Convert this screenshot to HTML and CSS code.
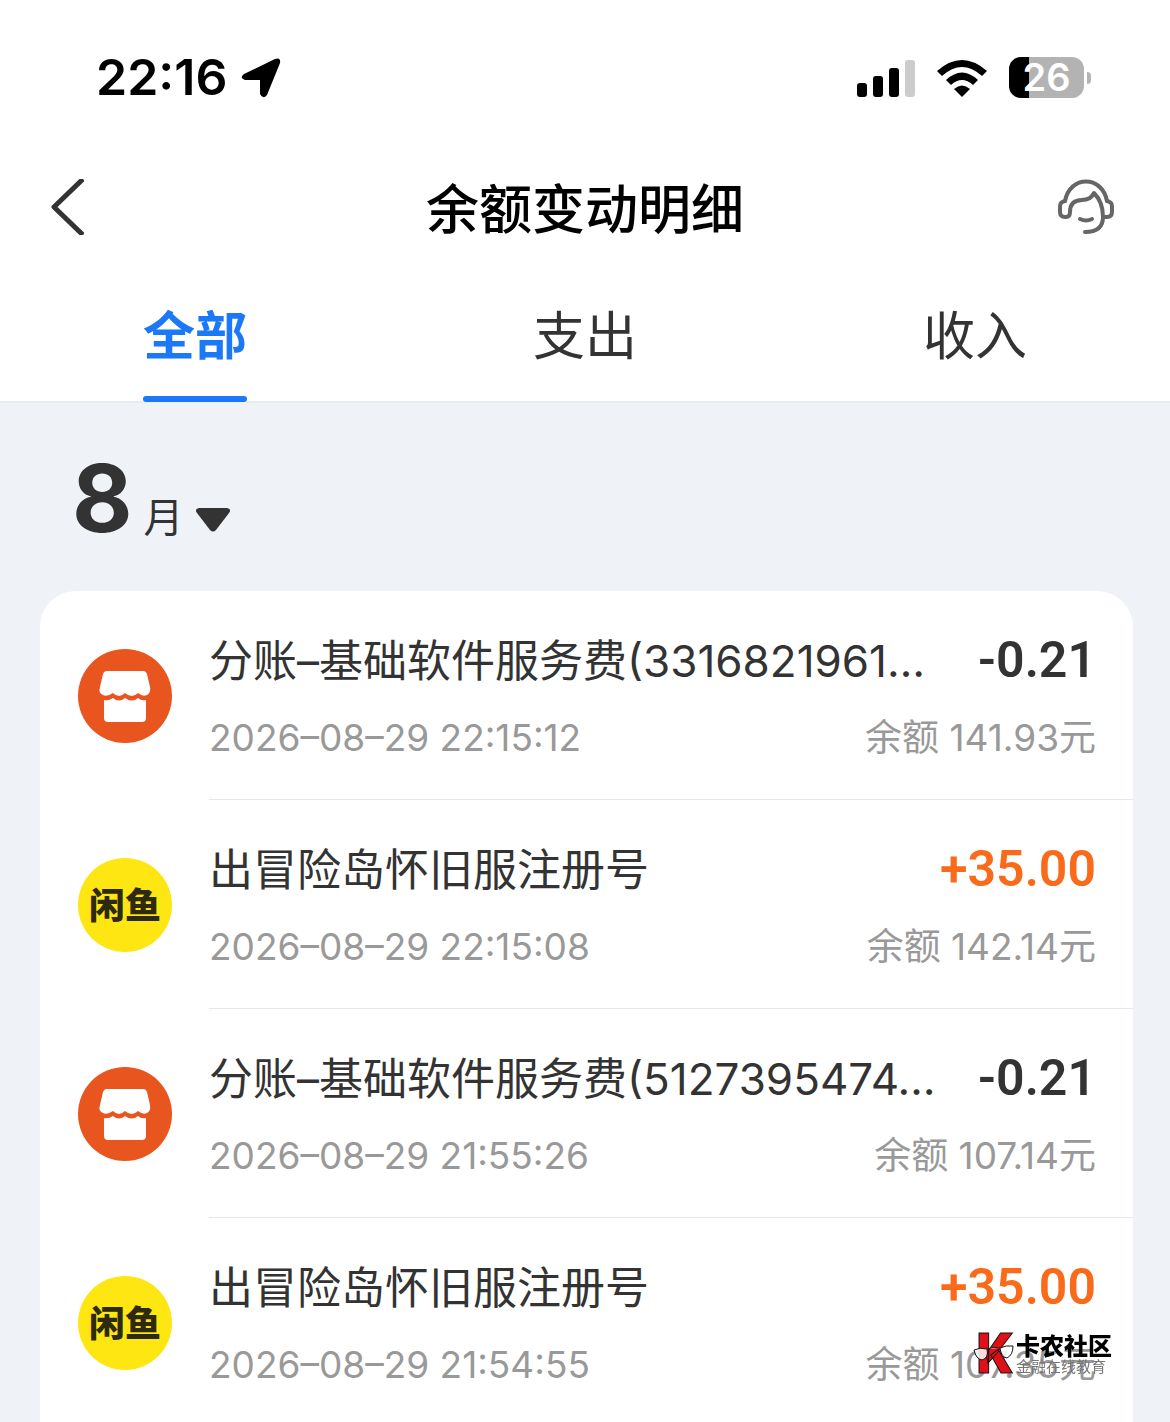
FILE: index.html
```html
<!DOCTYPE html>
<html lang="zh-CN">
<head>
  <meta charset="UTF-8" />
  <meta name="viewport" content="width=device-width, initial-scale=1.0"/>
  <title>余额变动明细</title>
  <link rel="stylesheet" href="styles.css">
</head>
<body>
  <svg class="sprite" aria-hidden="true">
    <symbol id="shop" viewBox="0 0 94 94">
      <circle cx="47" cy="47" r="47" fill="#e8551e"/>
      <path fill="#fff" d="M29 22H65Q68 22 69 25L72 38Q73 44 69 46Q65 48 60 44Q54 50 47 44Q41 50 35 44Q29 48 25 46Q20 44 22 38L25 25Q26 22 29 22Z"/>
      <path fill="#fff" d="M26 51Q31 52 35 49Q41 54 47 49Q54 54 60 49Q63 52 68 51V69Q68 73 64 73H30Q26 73 26 69Z"/>
    </symbol>
  </svg>

  <header>
    <div class="status">
      <div class="status-left">
        <span class="time">22:16</span>
        <svg width="40" height="40" viewBox="0 0 40 40"><path d="M3 16L34 1Q40-1 39 5L26 37Q22 42 19 36V22H4Q-2 20 3 16Z"/></svg>
      </div>
      <div class="status-right">
        <svg width="58" height="38" viewBox="0 0 58 38">
          <rect x="0" y="24" width="10" height="14" rx="3"/>
          <rect x="16" y="17" width="10" height="21" rx="3"/>
          <rect x="32" y="9" width="10" height="29" rx="3"/>
          <rect x="48" y="1" width="10" height="37" rx="3" fill="#ccc"/>
        </svg>
        <svg width="50" height="38" viewBox="0 0 50 38">
          <path d="M0 12Q25-10 50 12L45 17Q25-1 5 17Z"/>
          <path d="M9 21Q25 6 41 21L36 26Q25 16 14 26Z"/>
          <path d="M17 30Q25 23 33 30L25 38Z"/>
        </svg>
        <div class="battery"><span class="battery-level">26</span><i class="battery-tip"></i></div>
      </div>
    </div>

    <div class="nav">
      <button class="icon-btn" aria-label="返回">
        <svg width="34" height="56" viewBox="0 0 34 56" fill="none" stroke="#333" stroke-width="5" stroke-linejoin="round"><path d="M33 0L4 28L33 56"/></svg>
      </button>
      <h1>余额变动明细</h1>
      <button class="icon-btn" aria-label="客服">
        <svg width="58" height="56" viewBox="0 0 58 56" fill="none" stroke="#666" stroke-width="4" stroke-linecap="round" stroke-linejoin="round">
          <path d="M8 22C13-4 45-4 50 22"/>
          <path d="M8 22Q3 23 3 27V33Q3 38 8 38H9Q13 38 13 33C13 24 18 21 25 21C32 21 35 18 37 14C43 20 46 27 46 38C46 48 40 53 28 53"/>
          <path d="M50 22Q55 23 55 27V33Q55 38 50 38H46"/>
          <path d="M23 40Q29 43 35 40"/>
        </svg>
      </button>
    </div>

    <nav class="tabs">
      <button class="tab active">全部</button>
      <button class="tab">支出</button>
      <button class="tab">收入</button>
    </nav>
  </header>

  <main>
    <button class="month">
      <span class="month-num">8</span>
      <span class="month-unit">月</span>
      <svg width="34" height="24" viewBox="0 0 34 24"><path fill="#333" d="M3 0H31Q36 1 33 5L20 22Q17 25 14 22L1 5Q-2 1 3 0Z"/></svg>
    </button>

    <ul class="list">
      <li class="item">
        <svg class="avatar"><use href="#shop"/></svg>
        <div class="info">
          <div class="line">
            <span class="name">分账–基础软件服务费(3316821961…</span>
            <span class="amount">-0.21</span>
          </div>
          <div class="line sub"><span>2026–08–29 22:15:12</span><span>余额 141.93元</span></div>
        </div>
      </li>
      <li class="item">
        <span class="avatar fish">闲鱼</span>
        <div class="info">
          <div class="line">
            <span class="name">出冒险岛怀旧服注册号</span>
            <span class="amount in">+35.00</span>
          </div>
          <div class="line sub"><span>2026–08–29 22:15:08</span><span>余额 142.14元</span></div>
        </div>
      </li>
      <li class="item">
        <svg class="avatar"><use href="#shop"/></svg>
        <div class="info">
          <div class="line">
            <span class="name">分账–基础软件服务费(5127395474…</span>
            <span class="amount">-0.21</span>
          </div>
          <div class="line sub"><span>2026–08–29 21:55:26</span><span>余额 107.14元</span></div>
        </div>
      </li>
      <li class="item">
        <span class="avatar fish">闲鱼</span>
        <div class="info">
          <div class="line">
            <span class="name">出冒险岛怀旧服注册号</span>
            <span class="amount in">+35.00</span>
          </div>
          <div class="line sub"><span>2026–08–29 21:54:55</span><span>余额 107.35元</span></div>
        </div>
      </li>
    </ul>
  </main>

  <div class="watermark">
    <svg class="mark-logo" width="42" height="44" viewBox="0 0 42 44">
      <text class="mark-k" x="2" y="42">K</text>
      <path d="M0 19Q6 16 13 18Q15 27 8 29Q2 28 0 19ZM26 17Q32 14 39 15Q39 24 33 27Q27 26 26 17ZM13 18Q20 15 26 17" fill="#fff" fill-opacity=".85" stroke="#111" stroke-width="1"/>
    </svg>
    <div class="mark-text">
      <span class="mark-name">卡农社区</span>
      <span class="mark-sub">金融在线教育</span>
    </div>
  </div>
</body>
</html>
```
FILE: styles.css
```css
* {
  box-sizing: border-box;
}
body {
  margin: 0;
  min-height: 100vh;
  background: #eff3f8;
  color: #333;
  font-family: Inter, "Noto Sans CJK SC", sans-serif;
  line-height: 1.3;
}
button {
  padding: 0;
  border: none;
  background: none;
  color: inherit;
  font-family: inherit;
  line-height: inherit;
  cursor: pointer;
}
svg {
  display: block;
}
.sprite {
  position: absolute;
  width: 0;
  height: 0;
}
header {
  background: #fff;
  border-bottom: 2px solid #e9ebee;
}

/* status bar */
.status {
  display: flex;
  justify-content: space-between;
  align-items: center;
  height: 155px;
  padding: 0 79px 0 96px;
  color: #000;
}
.status-left {
  display: flex;
  align-items: center;
  gap: 14px;
}
.time {
  font-size: 50px;
  font-weight: 600;
}
.status-right {
  display: flex;
  align-items: center;
  gap: 22px;
}
.battery {
  display: flex;
  align-items: center;
  gap: 3px;
}
.battery-level {
  width: 75px;
  border-radius: 12px;
  background: linear-gradient(to right, #000 20px, #b3b3b3 20px);
  color: #fff;
  font-size: 38px;
  font-weight: 600;
  line-height: 41px;
  text-align: center;
}
.battery-tip {
  width: 4px;
  height: 12px;
  border-radius: 0 6px 6px 0;
  background: #b3b3b3;
}

/* title bar */
.nav {
  display: flex;
  justify-content: space-between;
  align-items: center;
  height: 104px;
  padding: 0 50px;
}
.icon-btn {
  display: flex;
  width: 63px;
}
h1 {
  margin: 0;
  padding-top: 6px;
  color: #000;
  font-size: 53px;
  font-weight: 500;
}

.tabs {
  display: grid;
  grid-template-columns: repeat(3, 1fr);
  justify-items: center;
}
.tab {
  height: 142px;
  padding-top: 14px;
  font-size: 52px;
}
.tab.active {
  position: relative;
  color: #1b78f7;
  font-weight: 700;
}
.tab.active::after {
  content: "";
  position: absolute;
  left: 0;
  right: 0;
  bottom: -1px;
  height: 6px;
  border-radius: 3px;
  background: #1b78f7;
}

main {
  padding: 35px 37px 0 40px;
}
.month {
  display: flex;
  align-items: baseline;
  height: 153px;
  margin-left: 32px;
}
.month-num {
  font-size: 93px;
  font-weight: 700;
}
.month-unit {
  margin: 0 12px 0 11px;
  font-size: 40px;
}

/* records */
.list {
  margin: 0;
  padding: 0;
  border-radius: 36px 36px 0 0;
  background: #fff;
  list-style: none;
}
.item {
  display: flex;
  align-items: center;
  gap: 37px;
  height: 209px;
  padding-left: 38px;
}
.avatar {
  flex: none;
  width: 94px;
  height: 94px;
}
.fish {
  border-radius: 50%;
  background: #fde611;
  color: #2e2a10;
  font-size: 36px;
  font-weight: 900;
  line-height: 96px;
  text-align: center;
}
.info {
  flex: 1;
  height: 209px;
  padding: 37px 37px 0 0;
  border-bottom: 1px solid #e8e8e8;
}
.line {
  display: flex;
  justify-content: space-between;
  align-items: baseline;
  height: 64px;
  line-height: 64px;
  white-space: nowrap;
}
.name {
  font-size: 44px;
}
.amount {
  font-family: Roboto, sans-serif;
  font-size: 50px;
  font-weight: 600;
}
.amount.in {
  color: #f96a1b;
}
.sub {
  margin-top: 14px;
  color: #999;
  font-size: 37px;
}

.watermark {
  position: fixed;
  right: 58px;
  bottom: 47px;
  display: flex;
  align-items: center;
}
.mark-logo {
  overflow: visible;
}
.mark-k {
  fill: #e01018;
  stroke: #111;
  stroke-width: 1px;
  font-family: Roboto, sans-serif;
  font-size: 56px;
  font-weight: 900;
}
.mark-text {
  display: flex;
  flex-direction: column;
  padding-top: 4px;
}
.mark-name {
  color: #000;
  font-size: 24px;
  font-weight: 900;
  line-height: 24px;
}
.mark-sub {
  color: #777;
  font-size: 15px;
  line-height: 16px;
}
```
